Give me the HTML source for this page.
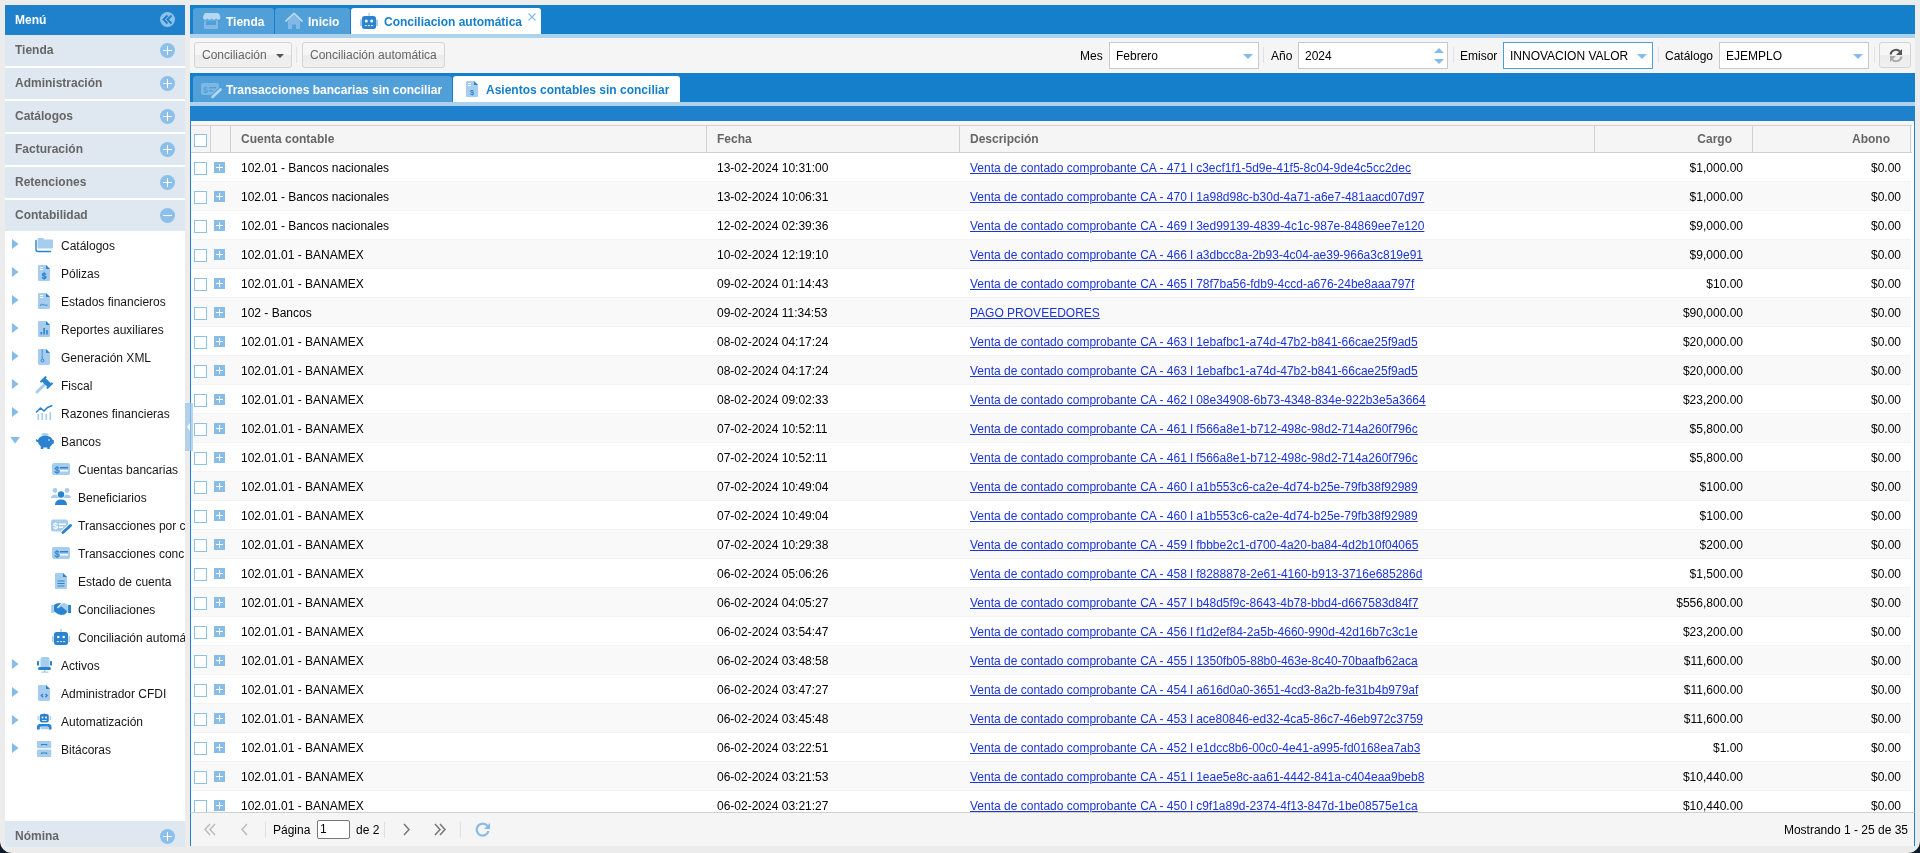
<!DOCTYPE html>
<html><head><meta charset="utf-8">
<style>
*{box-sizing:border-box;margin:0;padding:0}
html,body{width:1920px;height:853px;overflow:hidden}
#menu,#main{will-change:transform}
body{background:#ececec;font-family:"Liberation Sans",sans-serif;font-size:12px;color:#000;position:relative}
#menu{position:absolute;left:5px;top:5px;width:180px;height:842px;background:#fff;overflow:hidden}
#menu .hd{position:absolute;left:0;top:0;width:180px;height:30px;background:#1f80cc;color:#fff;font-weight:bold;font-size:12px;line-height:30px;padding-left:10px}
.acc{position:absolute;left:0;width:180px;height:31px;background:#dfe8f1;color:#666;font-weight:bold;font-size:12px;line-height:31px;padding-left:10px}
.pc{position:absolute;right:10px;top:8px;width:15px;height:15px;border-radius:50%;background:#8cc0ea}
.pc:before{content:"";position:absolute;left:3.2px;top:6.7px;width:8.6px;height:1.6px;background:#fff}
.pc.plus:after{content:"";position:absolute;left:6.7px;top:3.2px;width:1.6px;height:8.6px;background:#fff}
.ti{position:absolute;height:28px;line-height:30px;color:#151515;font-size:12px;white-space:nowrap}
#main{position:absolute;left:190px;top:5px;width:1725px;height:841px;background:#fff}
.a{position:absolute}
.tab{position:absolute;height:26px;background:#519fd9;border-radius:3px 3px 0 0;color:#fff;font-weight:bold;font-size:12px;line-height:28px;white-space:nowrap}
.tab.act{background:#fff;color:#157fcc}
.tab span{position:absolute;top:0}
.btn{position:absolute;top:4px;height:26px;border:1px solid #d4d4d4;border-radius:3px;background:linear-gradient(#f6f6f6,#f6f6f6 48%,#ececec 52%,#f0f0f0);color:#666;font-size:12px;line-height:25px;padding:0 7px;white-space:nowrap}
.lbl{position:absolute;top:0;line-height:36px;color:#000;font-size:12px;white-space:nowrap}
.fld{position:absolute;top:4px;height:27px;border:1px solid #c9c9c9;background:#fff;color:#000;font-size:12px;line-height:26px;padding-left:6px;white-space:nowrap}
.trg{position:absolute;right:5px;top:11px;width:0;height:0;border-left:5px solid transparent;border-right:5px solid transparent;border-top:5px solid #86bce7}
.sep{position:absolute;top:9px;width:1px;height:16px;background:#e2e2e2}
#grid{position:absolute;left:0;top:115px;width:1725px;height:692px;background:#fff;border-left:1px solid #1f80cc;border-right:1px solid #1f80cc;overflow:hidden}
#gap{position:absolute;left:-1px;top:0;width:1725px;height:5px;background:#f6f6f6;border-top:1px solid #1f80cc}
#ghd{position:absolute;left:0;top:5px;width:1721px;height:28px;background:#f5f5f5;border-top:1px solid #d0d0d0;border-bottom:1px solid #d0d0d0}
#ghd .ch{position:absolute;top:0;height:26px;line-height:26px;color:#666;font-weight:bold;font-size:12px;border-right:1px solid #d0d0d0;white-space:nowrap}
.row{position:absolute;left:0;width:1720px;height:29px;background:#fff;border-bottom:1px solid #f3f3f3}
.row.alt{background:#f9f9f9}
.row span,.row a{position:absolute;top:1px;line-height:28px;white-space:nowrap;font-size:12px}
.row .c1{left:50px}
.row .c2{left:526px}
.row .c3{left:779px;color:#1b35d8;text-decoration:underline}
.row .c4{right:168px;text-align:right}
.row .c5{right:10px;text-align:right}
.cb{position:absolute;left:3px;top:9px;width:13px;height:13px;border:1px solid #8fc0e8;background:#fff}
.ex{position:absolute;left:23px;top:9px;width:11px;height:11px;background:#88bde8}
.ex:before{content:"";position:absolute;left:2px;top:5px;width:7px;height:1px;background:#fff}
.ex:after{content:"";position:absolute;left:5px;top:2px;width:1px;height:7px;background:#fff}
#pg{position:absolute;left:0;top:807px;width:1725px;height:34px;background:#f5f5f5;border-top:1px solid #d0d0d0;border-left:1px solid #1f80cc;border-right:1px solid #1f80cc}
</style></head><body>
<div id="menu">
  <div class="hd">Menú</div>
  <div class="acc" style="top:30px">Tienda<span class="pc plus"></span></div>
  <div class="acc" style="top:63px">Administración<span class="pc plus"></span></div>
  <div class="acc" style="top:96px">Catálogos<span class="pc plus"></span></div>
  <div class="acc" style="top:129px">Facturación<span class="pc plus"></span></div>
  <div class="acc" style="top:162px">Retenciones<span class="pc plus"></span></div>
  <div class="acc" style="top:195px">Contabilidad<span class="pc"></span></div>
  <div class="ti" style="top:226px;left:56px">Catálogos</div>
<div class="ti" style="top:254px;left:56px">Pólizas</div>
<div class="ti" style="top:282px;left:56px">Estados financieros</div>
<div class="ti" style="top:310px;left:56px">Reportes auxiliares</div>
<div class="ti" style="top:338px;left:56px">Generación XML</div>
<div class="ti" style="top:366px;left:56px">Fiscal</div>
<div class="ti" style="top:394px;left:56px">Razones financieras</div>
<div class="ti" style="top:422px;left:56px">Bancos</div>
<div class="ti" style="top:450px;left:73px">Cuentas bancarias</div>
<div class="ti" style="top:478px;left:73px">Beneficiarios</div>
<div class="ti" style="top:506px;left:73px">Transacciones por conciliar</div>
<div class="ti" style="top:534px;left:73px">Transacciones conciliadas</div>
<div class="ti" style="top:562px;left:73px">Estado de cuenta</div>
<div class="ti" style="top:590px;left:73px">Conciliaciones</div>
<div class="ti" style="top:618px;left:73px">Conciliación automática</div>
<div class="ti" style="top:646px;left:56px">Activos</div>
<div class="ti" style="top:674px;left:56px">Administrador CFDI</div>
<div class="ti" style="top:702px;left:56px">Automatización</div>
<div class="ti" style="top:730px;left:56px">Bitácoras</div>
  <div class="acc" style="top:816px">Nómina<span class="pc plus"></span></div>
</div>
<svg style="position:absolute;left:0;top:0" width="190" height="853"><path d="M12 239 l6.6 5 l-6.6 5z" fill="#86bce7"/><path d="M12 267 l6.6 5 l-6.6 5z" fill="#86bce7"/><path d="M12 295 l6.6 5 l-6.6 5z" fill="#86bce7"/><path d="M12 323 l6.6 5 l-6.6 5z" fill="#86bce7"/><path d="M12 351 l6.6 5 l-6.6 5z" fill="#86bce7"/><path d="M12 379 l6.6 5 l-6.6 5z" fill="#86bce7"/><path d="M12 407 l6.6 5 l-6.6 5z" fill="#86bce7"/><path d="M10.2 437 h9.8 l-4.9 6.5z" fill="#86bce7"/><path d="M12 659 l6.6 5 l-6.6 5z" fill="#86bce7"/><path d="M12 687 l6.6 5 l-6.6 5z" fill="#86bce7"/><path d="M12 715 l6.6 5 l-6.6 5z" fill="#86bce7"/><path d="M12 743 l6.6 5 l-6.6 5z" fill="#86bce7"/><path d="M38.5 238 h4.5 l1.6 1.6 h7.4 q1 0 1 1 v7 q0 1 -1 1 h-13.5 q-1 0 -1 -1 v-8.6 q0 -1 1 -1z" fill="#a7cdee"/><path d="M36 240.5 v9 q0 2 2 2 h12.5" stroke="#2a83ce" stroke-width="1.4" fill="none" stroke-linecap="round"/><path d="M39 265 h7 l4 4 v11 q0 1 -1 1 h-10 q-1 0 -1 -1 v-14 q0 -1 1 -1z" fill="#a7cdee"/><path d="M46 265 l4 4 h-4z" fill="#2a83ce"/><rect x="40" y="267" width="3" height="1" fill="#fff"/><rect x="40" y="269" width="3" height="1" fill="#fff"/><text x="44" y="279" font-family="Liberation Sans" font-weight="bold" font-size="8.5" fill="#2a83ce" stroke="#2a83ce" stroke-width="0.3" text-anchor="middle">$</text><path d="M39 293 h7 l4 4 v11 q0 1 -1 1 h-10 q-1 0 -1 -1 v-14 q0 -1 1 -1z" fill="#a7cdee"/><path d="M46 293 l4 4 h-4z" fill="#2a83ce"/><rect x="40" y="295" width="3" height="1" fill="#fff"/><rect x="40" y="297" width="3" height="1" fill="#fff"/><path d="M40 306 l1.6 -2.2 l1.2 1.6 l1 -1 l0.8 0.8 h3" stroke="#2a83ce" stroke-width="0.9" fill="none"/><path d="M39 321 h7 l4 4 v11 q0 1 -1 1 h-10 q-1 0 -1 -1 v-14 q0 -1 1 -1z" fill="#a7cdee"/><path d="M46 321 l4 4 h-4z" fill="#2a83ce"/><rect x="40.5" y="332" width="1.6" height="2.5" fill="#2a83ce"/><rect x="43.3" y="328" width="1.6" height="6.5" fill="#2a83ce"/><rect x="46.1" y="330" width="1.6" height="4.5" fill="#2a83ce"/><path d="M39 349 h7 l4 4 v11 q0 1 -1 1 h-10 q-1 0 -1 -1 v-14 q0 -1 1 -1z" fill="#a7cdee"/><path d="M46 349 l4 4 h-4z" fill="#2a83ce"/><path d="M41.5 350 h1.5 M41.5 352 h1.5 M41.5 354 h1.5 M41.5 356 h1.5 M42.2 357 v1.5" stroke="#2a83ce" stroke-width="1.1" fill="none"/><circle cx="42.5" cy="360.5" r="1.4" stroke="#2a83ce" stroke-width="1" fill="none"/><path d="M37 392 l8 -8" stroke="#a7cdee" stroke-width="3" stroke-linecap="round"/><g transform="rotate(45 46.5 382.5)"><rect x="42.5" y="380" width="8" height="5" fill="#2a83ce"/><rect x="41" y="378.5" width="2" height="8" rx="0.5" fill="#2a83ce"/><rect x="50" y="378.5" width="2" height="8" rx="0.5" fill="#2a83ce"/></g><path d="M36.5 412 l4 -4 l3.5 3 l3.5 -3.5 l4.2 -1.8" stroke="#2a83ce" stroke-width="1.6" fill="none" stroke-linejoin="round" stroke-linecap="round"/><rect x="37.5" y="414" width="1.6" height="6" fill="#a7cdee"/><rect x="41.5" y="413" width="1.6" height="7" fill="#a7cdee"/><rect x="45.5" y="414" width="1.6" height="6" fill="#a7cdee"/><rect x="49.5" y="412" width="1.6" height="8" fill="#a7cdee"/><ellipse cx="45" cy="434.5" rx="3.5" ry="1.6" fill="#a7cdee"/><path d="M38 440 q1 -4 7 -4.2 q6 0.2 7.5 4 l1.3 0.2 v3.5 l-1.5 0.5 q-1 2 -2.5 3 v2 h-2.5 v-1.5 h-4 v1.5 h-2.5 v-2.5 q-2.5 -2 -2.8 -4.5 h-1 l-1.5 -1.5z" fill="#2a83ce"/><path d="M36.2 439.5 l1.5 1.5" stroke="#2a83ce" stroke-width="1.2"/><circle cx="49" cy="440" r="0.8" fill="#fff"/><rect x="52" y="463" width="18" height="12" rx="2" fill="#a7cdee"/><text x="57" y="472.5" font-family="Liberation Sans" font-size="9" fill="#2a83ce" stroke="#2a83ce" stroke-width="0.25" text-anchor="middle">$</text><rect x="60" y="467" width="8" height="1.5" fill="#2a83ce"/><rect x="60" y="470" width="8" height="1.5" fill="#fff"/><circle cx="55" cy="490.5" r="2.4" fill="#a7cdee"/><circle cx="67" cy="490.5" r="2.4" fill="#a7cdee"/><path d="M51 498 q0 -3.5 4.5 -3.5 q2.5 0 3.5 1.5 v2z M71 498 q0 -3.5 -4.5 -3.5 q-2.5 0 -3.5 1.5 v2z" fill="#a7cdee"/><circle cx="61" cy="494.5" r="3.8" fill="#fff"/><circle cx="61" cy="494.5" r="3.2" fill="#2a83ce"/><path d="M54.2 505.5 q0 -6.6 6.8 -6.6 q6.8 0 6.8 6.6z" fill="#fff"/><path d="M55 505 q0 -5.5 6 -5.5 q6 0 6 5.5z" fill="#2a83ce"/><rect x="51" y="519.5" width="17" height="12" rx="2" fill="#a7cdee"/><text x="55.5" y="529" font-family="Liberation Sans" font-weight="bold" font-size="9" fill="#fff" text-anchor="middle">$</text><rect x="59" y="523.5" width="7" height="1.5" fill="#fff"/><rect x="59" y="526.5" width="4" height="1.5" fill="#fff"/><path d="M63 532.5 l7.5 -7" stroke="#fff" stroke-width="4.6" stroke-linecap="round"/><path d="M63 532.5 l7.5 -7" stroke="#2a83ce" stroke-width="3" stroke-linecap="round"/><rect x="52" y="547" width="18" height="12" rx="2" fill="#a7cdee"/><text x="57" y="556.5" font-family="Liberation Sans" font-size="9" fill="#2a83ce" stroke="#2a83ce" stroke-width="0.25" text-anchor="middle">$</text><rect x="60" y="551" width="8" height="1.5" fill="#2a83ce"/><rect x="60" y="554" width="8" height="1.5" fill="#fff"/><path d="M56 573 h7 l4 4 v11 q0 1 -1 1 h-10 q-1 0 -1 -1 v-14 q0 -1 1 -1z" fill="#a7cdee"/><path d="M63 573 l4 4 h-4z" fill="#2a83ce"/><rect x="57.5" y="580.5" width="7" height="1" fill="#2a83ce"/><rect x="57.5" y="583" width="7" height="1" fill="#2a83ce"/><rect x="57.5" y="585.5" width="7" height="1" fill="#2a83ce"/><rect x="51.2" y="605" width="2.6" height="8" fill="#a7cdee"/><rect x="68.1" y="605" width="2.9" height="8" fill="#2a83ce"/><path d="M57.5 607.5 L61.8 603.4 Q64 602.7 66 603.4 L67.9 605 V612.2 L66.3 612.6 Z" fill="#a7cdee"/><path d="M54 605 L56.5 603.5 Q58.5 602.7 61.2 603 L57 607.3 Q58 608.6 59.2 608 L61.2 606.3 L66.8 611 Q67.4 612.3 66.3 613 L64.8 614.2 Q63.6 615.1 62.6 614.5 Q61.2 615.6 59.7 614.6 Q58.2 614.7 57.2 613.6 L54 611.6 Z" fill="#2a83ce"/><rect x="60.3" y="629" width="1.4" height="3" fill="#a7cdee"/><rect x="52" y="636" width="1.6" height="6" rx="0.5" fill="#a7cdee"/><rect x="68.4" y="636" width="1.6" height="6" rx="0.5" fill="#a7cdee"/><rect x="54" y="632" width="14" height="13" rx="2.5" fill="#2a83ce"/><circle cx="58.3" cy="637" r="1.3" fill="#fff"/><circle cx="63.7" cy="637" r="1.3" fill="#fff"/><rect x="56.8" y="641" width="2.2" height="1.1" fill="#fff" opacity="0.75"/><rect x="59.9" y="641" width="2.2" height="1.1" fill="#fff" opacity="0.75"/><rect x="63" y="641" width="2.2" height="1.1" fill="#fff" opacity="0.75"/><path d="M40.5 668 v-9 q0 -2 2 -2 h5 q2 0 2 2 v9z" fill="#a7cdee"/><rect x="37" y="661" width="2" height="4.5" rx="0.6" fill="#2a83ce"/><rect x="50" y="661" width="2" height="4.5" rx="0.6" fill="#2a83ce"/><rect x="38" y="667" width="13" height="3" rx="1.5" fill="#2a83ce"/><rect x="44" y="670" width="1.4" height="2" fill="#a7cdee"/><rect x="41" y="671.6" width="7.5" height="1.2" rx="0.6" fill="#a7cdee"/><path d="M39 685 h7 l4 4 v11 q0 1 -1 1 h-10 q-1 0 -1 -1 v-14 q0 -1 1 -1z" fill="#a7cdee"/><path d="M46 685 l4 4 h-4z" fill="#2a83ce"/><path d="M43 694 l-1.6 1.6 l1.6 1.6 M45.5 694 l1.6 1.6 l-1.6 1.6" stroke="#2a83ce" stroke-width="1.4" fill="none"/><rect x="43.6" y="712.6" width="1.2" height="1.6" fill="#a7cdee"/><rect x="37.5" y="716" width="1.3" height="4" fill="#a7cdee"/><rect x="49.7" y="716" width="1.3" height="4" fill="#a7cdee"/><rect x="39.8" y="714" width="9" height="8.6" rx="2" fill="#2a83ce"/><circle cx="42.5" cy="717.5" r="1" fill="#fff"/><circle cx="46" cy="717.5" r="1" fill="#fff"/><rect x="42" y="720" width="4.5" height="0.8" fill="#fff"/><path d="M37 729.4 v-2.5 q0 -3 3 -3 h8.5 q3 0 3 3 v2.5 h-2.8 v-2.5 h-8.9 v2.5z" fill="#2a83ce"/><rect x="40.5" y="726.2" width="7.5" height="3" fill="#a7cdee"/><rect x="37" y="741" width="14.2" height="7.3" rx="1" fill="#a7cdee"/><rect x="37" y="749.5" width="14.2" height="7.5" rx="1" fill="#a7cdee"/><path d="M41.5 745.5 v-1 h5.2 v1 M41.5 754 v-1 h5.2 v1" stroke="#2a83ce" stroke-width="1.1" fill="none"/></svg>
<svg style="position:absolute;left:155px;top:7px" width="25" height="25" viewBox="0 0 25 25"><circle cx="12.5" cy="12.5" r="7.5" fill="#8ec1ea"/><path d="M12.5 8.5 l-4 4 l4 4 M16.5 8.5 l-4 4 l4 4" stroke="#1f80cc" stroke-width="2" fill="none"/></svg>
<div id="main">
  <div class="a" style="left:0;top:0;width:1725px;height:29px;background:#157fcc"></div>
  <div class="a" style="left:0;top:29px;width:1725px;height:4px;background:#add2ed"></div>
  <div class="tab" style="left:3px;top:3px;width:81px"><span style="left:33px">Tienda</span></div>
  <div class="tab" style="left:85px;top:3px;width:75px"><span style="left:33px">Inicio</span></div>
  <div class="tab act" style="left:161px;top:3px;width:190px"><span style="left:33px">Conciliacion automática</span></div>
  <svg class="a" style="left:0;top:0" width="360" height="33">
    <!-- store -->
    <path d="M12.5 8 h15 q1.5 0 2 1.5 l1 3.5 q-0.6 1.8 -2.2 1.8 q-1.6 0 -2.2 -1.3 q-0.6 1.3 -2.2 1.3 q-1.6 0 -2.2 -1.3 q-0.6 1.3 -2.2 1.3 q-1.6 0 -2.2 -1.3 q-0.6 1.3 -2.2 1.3 q-1.6 0 -2.2 -1.8 l1 -3.5 q0.5 -1.5 2 -1.5z" fill="#b5d8f2" transform="translate(0 0)"/>
    <path d="M14 15.5 h14 v7.5 q0 1 -1 1 h-12 q-1 0 -1 -1z" fill="#80b9e6"/>
    <rect x="16" y="16" width="10" height="4" fill="#519fd9"/>
    <!-- house -->
    <path d="M96 16 l8 -7.5 l8 7.5" stroke="#b5d8f2" stroke-width="1.8" fill="none" stroke-linecap="round" stroke-linejoin="round"/>
    <path d="M98 15.5 l6 -5.5 l6 5.5 v8.5 h-4 v-4.5 h-4 v4.5 h-4z" fill="#80b9e6"/>
    <!-- robot -->
    <rect x="178.3" y="8" width="1.4" height="3" fill="#a7cdee"/>
    <rect x="170" y="14.5" width="2" height="6.5" rx="0.5" fill="#a7cdee"/><rect x="186" y="14.5" width="2" height="6.5" rx="0.5" fill="#a7cdee"/>
    <rect x="172" y="11" width="14" height="13" rx="2.5" fill="#2a83ce"/>
    <circle cx="176.3" cy="16" r="1.5" fill="#fff"/><circle cx="181.7" cy="16" r="1.5" fill="#fff"/>
    <rect x="174.8" y="20" width="2.2" height="1.1" fill="#fff" opacity="0.75"/><rect x="177.9" y="20" width="2.2" height="1.1" fill="#fff" opacity="0.75"/><rect x="181" y="20" width="2.2" height="1.1" fill="#fff" opacity="0.75"/>
    <!-- close x -->
    <path d="M338.5 8.5 l7 7 M345.5 8.5 l-7 7" stroke="#86bce7" stroke-width="1.2"/>
  </svg>
  <div class="a" style="left:0;top:33px;width:1725px;height:35px;background:#f5f5f5">
    <div class="btn" style="left:4px;width:98px">Conciliación<span class="a" style="left:81px;top:11px;width:0;height:0;border-left:4px solid transparent;border-right:4px solid transparent;border-top:4px solid #555"></span></div>
    <div class="sep" style="left:106px"></div>
    <div class="btn" style="left:112px;width:143px">Conciliación automática</div>
    <div class="lbl" style="left:890px">Mes</div>
    <div class="fld" style="left:919px;width:150px">Febrero<i class="trg"></i></div>
    <div class="sep" style="left:1073px"></div>
    <div class="lbl" style="left:1081px">Año</div>
    <div class="fld" style="left:1108px;width:150px">2024
      <svg class="a" style="right:3px;top:3px" width="10" height="20"><path d="M0 7 l5 -5 l5 5z M0 13 l5 5 l5 -5z" fill="#86bce7"/></svg></div>
    <div class="sep" style="left:1263px"></div>
    <div class="lbl" style="left:1270px">Emisor</div>
    <div class="fld" style="left:1313px;width:150px;border-color:#4c9ddc">INNOVACION VALOR<i class="trg"></i></div>
    <div class="sep" style="left:1468px"></div>
    <div class="lbl" style="left:1475px">Catálogo</div>
    <div class="fld" style="left:1529px;width:150px">EJEMPLO<i class="trg"></i></div>
    <div class="sep" style="left:1684px"></div>
    <div class="btn" style="left:1689px;width:32px;top:4px;height:26px"><svg class="a" style="left:8px;top:5px" width="16" height="15" viewBox="0 0 16 15"><path d="M2.5 6.5 a5.5 5.5 0 0 1 9.5 -2.8" stroke="#555" stroke-width="2" fill="none"/><path d="M13.5 8.5 a5.5 5.5 0 0 1 -9.5 2.8" stroke="#aaa" stroke-width="2" fill="none"/><path d="M14 1 v6 h-6z" fill="#555"/><path d="M2 14 v-6 h6z" fill="#aaa"/></svg></div>
  </div>
  <div class="a" style="left:0;top:68px;width:1725px;height:29px;background:#157fcc"></div>
  <div class="a" style="left:0;top:97px;width:1725px;height:4px;background:#add2ed"></div>
  <div class="a" style="left:0;top:101px;width:1725px;height:14px;background:#1f80cc"></div>
  <div class="tab" style="left:3px;top:71px;width:259px"><span style="left:33px">Transacciones bancarias sin conciliar</span></div>
  <div class="tab act" style="left:263px;top:71px;width:227px"><span style="left:33px">Asientos contables sin conciliar</span></div>
  <svg class="a" style="left:0;top:68px" width="300" height="33">
    <rect x="11" y="10" width="18" height="12" rx="2" fill="#7db7e4"/>
    <text x="15.5" y="20" font-family="Liberation Sans" font-weight="bold" font-size="9" fill="#519fd9" text-anchor="middle">$</text>
    <rect x="19" y="14" width="7" height="1.4" fill="#519fd9"/><rect x="19" y="17" width="4" height="1.4" fill="#519fd9"/>
    <path d="M22.5 24 l8 -7.5" stroke="#519fd9" stroke-width="4.5" stroke-linecap="round"/>
    <path d="M22.5 24 l8 -7.5" stroke="#b5d8f2" stroke-width="2.6" stroke-linecap="round"/>
    <!-- doc $ -->
    <path d="M277 8 h7 l4 4 v11 q0 1 -1 1 h-10 q-1 0 -1 -1 v-14 q0 -1 1 -1z" fill="#a7cdee"/>
    <path d="M284 8 l4 4 h-4z" fill="#2a83ce"/>
    <rect x="278" y="10" width="3" height="1" fill="#fff"/><rect x="278" y="12" width="3" height="1" fill="#fff"/>
    <text x="282" y="21.5" font-family="Liberation Sans" font-weight="bold" font-size="7.5" fill="#2a83ce" text-anchor="middle">$</text>
  </svg>
  <div id="grid">
    <div id="gap"></div>
    <div id="ghd">
      <div class="ch" style="left:0;width:20px"><i class="cb" style="top:8px"></i></div>
      <div class="ch" style="left:20px;width:20px"></div>
      <div class="ch" style="left:40px;width:476px;padding-left:10px">Cuenta contable</div>
      <div class="ch" style="left:516px;width:253px;padding-left:10px">Fecha</div>
      <div class="ch" style="left:769px;width:635px;padding-left:10px">Descripción</div>
      <div class="ch" style="left:1404px;width:158px;text-align:right;padding-right:20px">Cargo</div>
      <div class="ch" style="left:1562px;width:158px;text-align:right;padding-right:20px">Abono</div>
    </div>
    <div class="row" style="top:33px"><i class="cb"></i><i class="ex"></i><span class="c1">102.01 - Bancos nacionales</span><span class="c2">13-02-2024 10:31:00</span><a class="c3">Venta de contado comprobante CA - 471 l c3ecf1f1-5d9e-41f5-8c04-9de4c5cc2dec</a><span class="c4">$1,000.00</span><span class="c5">$0.00</span></div>
<div class="row alt" style="top:62px"><i class="cb"></i><i class="ex"></i><span class="c1">102.01 - Bancos nacionales</span><span class="c2">13-02-2024 10:06:31</span><a class="c3">Venta de contado comprobante CA - 470 l 1a98d98c-b30d-4a71-a6e7-481aacd07d97</a><span class="c4">$1,000.00</span><span class="c5">$0.00</span></div>
<div class="row" style="top:91px"><i class="cb"></i><i class="ex"></i><span class="c1">102.01 - Bancos nacionales</span><span class="c2">12-02-2024 02:39:36</span><a class="c3">Venta de contado comprobante CA - 469 l 3ed99139-4839-4c1c-987e-84869ee7e120</a><span class="c4">$9,000.00</span><span class="c5">$0.00</span></div>
<div class="row alt" style="top:120px"><i class="cb"></i><i class="ex"></i><span class="c1">102.01.01 - BANAMEX</span><span class="c2">10-02-2024 12:19:10</span><a class="c3">Venta de contado comprobante CA - 466 l a3dbcc8a-2b93-4c04-ae39-966a3c819e91</a><span class="c4">$9,000.00</span><span class="c5">$0.00</span></div>
<div class="row" style="top:149px"><i class="cb"></i><i class="ex"></i><span class="c1">102.01.01 - BANAMEX</span><span class="c2">09-02-2024 01:14:43</span><a class="c3">Venta de contado comprobante CA - 465 l 78f7ba56-fdb9-4ccd-a676-24be8aaa797f</a><span class="c4">$10.00</span><span class="c5">$0.00</span></div>
<div class="row alt" style="top:178px"><i class="cb"></i><i class="ex"></i><span class="c1">102 - Bancos</span><span class="c2">09-02-2024 11:34:53</span><a class="c3">PAGO PROVEEDORES</a><span class="c4">$90,000.00</span><span class="c5">$0.00</span></div>
<div class="row" style="top:207px"><i class="cb"></i><i class="ex"></i><span class="c1">102.01.01 - BANAMEX</span><span class="c2">08-02-2024 04:17:24</span><a class="c3">Venta de contado comprobante CA - 463 l 1ebafbc1-a74d-47b2-b841-66cae25f9ad5</a><span class="c4">$20,000.00</span><span class="c5">$0.00</span></div>
<div class="row alt" style="top:236px"><i class="cb"></i><i class="ex"></i><span class="c1">102.01.01 - BANAMEX</span><span class="c2">08-02-2024 04:17:24</span><a class="c3">Venta de contado comprobante CA - 463 l 1ebafbc1-a74d-47b2-b841-66cae25f9ad5</a><span class="c4">$20,000.00</span><span class="c5">$0.00</span></div>
<div class="row" style="top:265px"><i class="cb"></i><i class="ex"></i><span class="c1">102.01.01 - BANAMEX</span><span class="c2">08-02-2024 09:02:33</span><a class="c3">Venta de contado comprobante CA - 462 l 08e34908-6b73-4348-834e-922b3e5a3664</a><span class="c4">$23,200.00</span><span class="c5">$0.00</span></div>
<div class="row alt" style="top:294px"><i class="cb"></i><i class="ex"></i><span class="c1">102.01.01 - BANAMEX</span><span class="c2">07-02-2024 10:52:11</span><a class="c3">Venta de contado comprobante CA - 461 l f566a8e1-b712-498c-98d2-714a260f796c</a><span class="c4">$5,800.00</span><span class="c5">$0.00</span></div>
<div class="row" style="top:323px"><i class="cb"></i><i class="ex"></i><span class="c1">102.01.01 - BANAMEX</span><span class="c2">07-02-2024 10:52:11</span><a class="c3">Venta de contado comprobante CA - 461 l f566a8e1-b712-498c-98d2-714a260f796c</a><span class="c4">$5,800.00</span><span class="c5">$0.00</span></div>
<div class="row alt" style="top:352px"><i class="cb"></i><i class="ex"></i><span class="c1">102.01.01 - BANAMEX</span><span class="c2">07-02-2024 10:49:04</span><a class="c3">Venta de contado comprobante CA - 460 l a1b553c6-ca2e-4d74-b25e-79fb38f92989</a><span class="c4">$100.00</span><span class="c5">$0.00</span></div>
<div class="row" style="top:381px"><i class="cb"></i><i class="ex"></i><span class="c1">102.01.01 - BANAMEX</span><span class="c2">07-02-2024 10:49:04</span><a class="c3">Venta de contado comprobante CA - 460 l a1b553c6-ca2e-4d74-b25e-79fb38f92989</a><span class="c4">$100.00</span><span class="c5">$0.00</span></div>
<div class="row alt" style="top:410px"><i class="cb"></i><i class="ex"></i><span class="c1">102.01.01 - BANAMEX</span><span class="c2">07-02-2024 10:29:38</span><a class="c3">Venta de contado comprobante CA - 459 l fbbbe2c1-d700-4a20-ba84-4d2b10f04065</a><span class="c4">$200.00</span><span class="c5">$0.00</span></div>
<div class="row" style="top:439px"><i class="cb"></i><i class="ex"></i><span class="c1">102.01.01 - BANAMEX</span><span class="c2">06-02-2024 05:06:26</span><a class="c3">Venta de contado comprobante CA - 458 l f8288878-2e61-4160-b913-3716e685286d</a><span class="c4">$1,500.00</span><span class="c5">$0.00</span></div>
<div class="row alt" style="top:468px"><i class="cb"></i><i class="ex"></i><span class="c1">102.01.01 - BANAMEX</span><span class="c2">06-02-2024 04:05:27</span><a class="c3">Venta de contado comprobante CA - 457 l b48d5f9c-8643-4b78-bbd4-d667583d84f7</a><span class="c4">$556,800.00</span><span class="c5">$0.00</span></div>
<div class="row" style="top:497px"><i class="cb"></i><i class="ex"></i><span class="c1">102.01.01 - BANAMEX</span><span class="c2">06-02-2024 03:54:47</span><a class="c3">Venta de contado comprobante CA - 456 l f1d2ef84-2a5b-4660-990d-42d16b7c3c1e</a><span class="c4">$23,200.00</span><span class="c5">$0.00</span></div>
<div class="row alt" style="top:526px"><i class="cb"></i><i class="ex"></i><span class="c1">102.01.01 - BANAMEX</span><span class="c2">06-02-2024 03:48:58</span><a class="c3">Venta de contado comprobante CA - 455 l 1350fb05-88b0-463e-8c40-70baafb62aca</a><span class="c4">$11,600.00</span><span class="c5">$0.00</span></div>
<div class="row" style="top:555px"><i class="cb"></i><i class="ex"></i><span class="c1">102.01.01 - BANAMEX</span><span class="c2">06-02-2024 03:47:27</span><a class="c3">Venta de contado comprobante CA - 454 l a616d0a0-3651-4cd3-8a2b-fe31b4b979af</a><span class="c4">$11,600.00</span><span class="c5">$0.00</span></div>
<div class="row alt" style="top:584px"><i class="cb"></i><i class="ex"></i><span class="c1">102.01.01 - BANAMEX</span><span class="c2">06-02-2024 03:45:48</span><a class="c3">Venta de contado comprobante CA - 453 l ace80846-ed32-4ca5-86c7-46eb972c3759</a><span class="c4">$11,600.00</span><span class="c5">$0.00</span></div>
<div class="row" style="top:613px"><i class="cb"></i><i class="ex"></i><span class="c1">102.01.01 - BANAMEX</span><span class="c2">06-02-2024 03:22:51</span><a class="c3">Venta de contado comprobante CA - 452 l e1dcc8b6-00c0-4e41-a995-fd0168ea7ab3</a><span class="c4">$1.00</span><span class="c5">$0.00</span></div>
<div class="row alt" style="top:642px"><i class="cb"></i><i class="ex"></i><span class="c1">102.01.01 - BANAMEX</span><span class="c2">06-02-2024 03:21:53</span><a class="c3">Venta de contado comprobante CA - 451 l 1eae5e8c-aa61-4442-841a-c404eaa9beb8</a><span class="c4">$10,440.00</span><span class="c5">$0.00</span></div>
<div class="row" style="top:671px"><i class="cb"></i><i class="ex"></i><span class="c1">102.01.01 - BANAMEX</span><span class="c2">06-02-2024 03:21:27</span><a class="c3">Venta de contado comprobante CA - 450 l c9f1a89d-2374-4f13-847d-1be08575e1ca</a><span class="c4">$10,440.00</span><span class="c5">$0.00</span></div>
  </div>
  <div id="pg">
    <svg class="a" style="left:-1px;top:1px" width="300" height="33">
      <path d="M20 10 l-5 5.5 l5 5.5 M25 10 l-5 5.5 l5 5.5" stroke="#bbb" stroke-width="1.5" fill="none"/>
      <path d="M57 10 l-5 5.5 l5 5.5" stroke="#bbb" stroke-width="1.5" fill="none"/>
      <rect x="75" y="8" width="1" height="16" fill="#e0e0e0"/>
      <rect x="194" y="8" width="1" height="16" fill="#e0e0e0"/>
      <path d="M214 10 l5 5.5 l-5 5.5" stroke="#777" stroke-width="1.5" fill="none"/>
      <path d="M245 10 l5 5.5 l-5 5.5 M250 10 l5 5.5 l-5 5.5" stroke="#777" stroke-width="1.5" fill="none"/>
      <rect x="270" y="8" width="1" height="16" fill="#e0e0e0"/>
      <path d="M297.5 12 a6 6 0 1 0 1 5" stroke="#86bce7" stroke-width="2.2" fill="none"/>
      <path d="M300 9 v6 h-6z" fill="#86bce7"/>
    </svg>
    <div class="a" style="left:82px;top:0;line-height:35px;color:#000">Página</div>
    <div class="a" style="left:126px;top:7px;width:33px;height:19px;border:1px solid #777;border-radius:2px;background:#fff;line-height:17px;padding-left:2px">1</div>
    <div class="a" style="left:165px;top:0;line-height:35px;color:#000">de 2</div>
    <div class="a" style="right:6px;top:0;line-height:35px;color:#000">Mostrando 1 - 25 de 35</div>
  </div>
  <div class="a" style="left:-5px;top:398px;width:8px;height:48px;background:rgba(160,200,235,0.75)"></div>
  <svg class="a" style="left:-4px;top:416px" width="6" height="12"><path d="M4 2 l-3 4 l3 4z" fill="#fff"/></svg>
</div>
<svg style="position:absolute;left:0;top:841px" width="12" height="12"><path d="M0 0 A12 12 0 0 0 12 12 H0z" fill="#0d1b2a"/></svg>
<svg style="position:absolute;left:1908px;top:841px" width="12" height="12"><path d="M12 0 A12 12 0 0 1 0 12 H12z" fill="#0d1b2a"/></svg>
</body></html>
